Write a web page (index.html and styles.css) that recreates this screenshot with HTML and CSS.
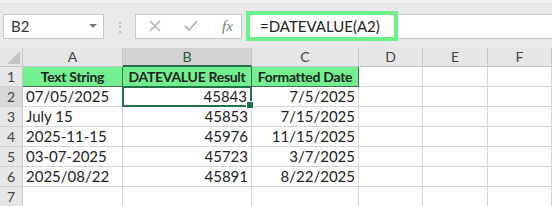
FILE: index.html
```html
<!DOCTYPE html>
<html lang="en">
<head>
    <meta charset="UTF-8">
    <title>DATEVALUE</title>
    <link rel="stylesheet" href="styles.css">
</head>
<body>
    <div class="toolbar">
        <div class="name-box">
            <span>B2</span>
            <span class="caret"></span>
        </div>
        <div class="grip">&#8942;</div>
        <div class="fx-box">
            <svg width="14" height="14" viewBox="0 0 14 14"><path d="M2 2 L12 12 M12 2 L2 12" stroke="#b4b4b4" stroke-width="1.6" fill="none"/></svg>
            <svg width="14" height="14" viewBox="0 0 14 14"><path d="M1 7 L5 11 L13 2" stroke="#b4b4b4" stroke-width="1.8" fill="none"/></svg>
            <span class="fx">fx</span>
        </div>
        <div class="formula">=DATEVALUE(A2)</div>
        <div class="formula-rest"></div>
    </div>

    <div class="sheet">
        <div class="corner"><span class="tri"></span></div>
        <div class="col-head">A</div>
        <div class="col-head active">B</div>
        <div class="col-head">C</div>
        <div class="col-head">D</div>
        <div class="col-head">E</div>
        <div class="col-head">F</div>

        <div class="row-head">1</div>
        <div class="cell title">Text String</div>
        <div class="cell title">DATEVALUE Result</div>
        <div class="cell title">Formatted Date</div>
        <div class="cell"></div>
        <div class="cell"></div>
        <div class="cell"></div>

        <div class="row-head active">2</div>
        <div class="cell">07/05/2025</div>
        <div class="cell num selected">45843</div>
        <div class="cell num">7/5/2025</div>
        <div class="cell"></div>
        <div class="cell"></div>
        <div class="cell"></div>

        <div class="row-head">3</div>
        <div class="cell">July 15</div>
        <div class="cell num">45853</div>
        <div class="cell num">7/15/2025</div>
        <div class="cell"></div>
        <div class="cell"></div>
        <div class="cell"></div>

        <div class="row-head">4</div>
        <div class="cell">2025-11-15</div>
        <div class="cell num">45976</div>
        <div class="cell num">11/15/2025</div>
        <div class="cell"></div>
        <div class="cell"></div>
        <div class="cell"></div>

        <div class="row-head">5</div>
        <div class="cell">03-07-2025</div>
        <div class="cell num">45723</div>
        <div class="cell num">3/7/2025</div>
        <div class="cell"></div>
        <div class="cell"></div>
        <div class="cell"></div>

        <div class="row-head">6</div>
        <div class="cell">2025/08/22</div>
        <div class="cell num">45891</div>
        <div class="cell num">8/22/2025</div>
        <div class="cell"></div>
        <div class="cell"></div>
        <div class="cell"></div>

        <div class="row-head">7</div>
        <div class="cell"></div>
        <div class="cell"></div>
        <div class="cell"></div>
        <div class="cell"></div>
        <div class="cell"></div>
        <div class="cell"></div>
    </div>
</body>
</html>
```

FILE: styles.css
```css
* {
    margin: 0;
    padding: 0;
    box-sizing: border-box;
}

body {
    width: 552px;
    height: 206px;
    overflow: hidden;
    background: #ffffff;
    font-family: Lato, 'Open Sans', sans-serif;
    color: #222;
}

.toolbar {
    height: 48px;
    background: #e9e9e9;
    border-top: 3px solid #f3f3f3;
    display: flex;
    align-items: center;
    padding-left: 3px;
    padding-top: 1px;
}

.name-box {
    width: 101px;
    height: 25px;
    background: #fff;
    border: 1px solid #c8c8c8;
    display: flex;
    align-items: center;
    justify-content: space-between;
    padding: 0 6px 0 7px;
    font-size: 15px;
    color: #333;
}

.caret {
    width: 0;
    height: 0;
    border-left: 4px solid transparent;
    border-right: 4px solid transparent;
    border-top: 4px solid #777;
}

.grip {
    width: 31px;
    text-align: center;
    color: #b0b0b0;
    font-size: 14px;
}

.fx-box {
    width: 107px;
    height: 25px;
    background: #fff;
    border: 1px solid #c8c8c8;
    display: flex;
    align-items: center;
    padding-left: 12px;
    gap: 22px;
}

.fx {
    font-family: 'Liberation Serif', serif;
    font-style: italic;
    font-size: 15px;
    color: #777;
    margin-left: 2px;
}

.formula {
    margin-left: 4px;
    width: 152px;
    height: 30px;
    background: #fff;
    border: 4px solid #6cf08c;
    display: flex;
    align-items: center;
    padding-left: 10px;
    font-size: 15px;
    color: #222;
}

.formula-rest {
    flex: 1;
    height: 25px;
    background: #fff;
    border-top: 1px solid #c8c8c8;
    border-bottom: 1px solid #c8c8c8;
}

.sheet {
    display: grid;
    grid-template-columns: 23px 100px 129px 107px 64px 65px 64px;
    grid-template-rows: 19px repeat(7, 20px);
    font-size: 15px;
}

.corner {
    background: #e6e6e6;
    border-right: 1px solid #c4c4c4;
    border-bottom: 1px solid #c4c4c4;
    position: relative;
}

.tri {
    position: absolute;
    right: 2px;
    bottom: 2px;
    width: 0;
    height: 0;
    border-left: 13px solid transparent;
    border-bottom: 13px solid #c4c4c4;
}

.col-head {
    background: #e6e6e6;
    border-right: 1px solid #c4c4c4;
    border-bottom: 1px solid #c4c4c4;
    text-align: center;
    font-size: 14px;
    line-height: 18px;
    color: #444;
}

.col-head.active {
    background: #d2d2d2;
    border-bottom: 2px solid #217346;
    color: #1d5c38;
}

.row-head {
    background: #e6e6e6;
    border-right: 1px solid #c4c4c4;
    border-bottom: 1px solid #d0d0d0;
    font-size: 14px;
    line-height: 19px;
    text-align: center;
    color: #444;
}

.row-head.active {
    background: #d8d8d8;
}

.cell {
    border-right: 1px solid #d4d4d4;
    border-bottom: 1px solid #d4d4d4;
    line-height: 19px;
    padding: 0 3px;
    white-space: nowrap;
    overflow: hidden;
}

.cell.num {
    text-align: right;
}

.cell.title {
    background: #72f090;
    font-weight: bold;
    font-size: 14px;
    letter-spacing: -0.3px;
    text-align: center;
    padding: 0 1px;
    border-right: 1px solid #4a6a52;
    border-bottom: 1px solid #4a6a52;
}

.cell.selected {
    border: 2px solid #217346;
    margin: -1px 0 0 -1px;
    line-height: 17px;
    position: relative;
    overflow: visible;
}

.cell.selected::after {
    content: "";
    position: absolute;
    right: -4px;
    bottom: -4px;
    width: 6px;
    height: 6px;
    background: #217346;
    border: 1px solid #fff;
}
```
